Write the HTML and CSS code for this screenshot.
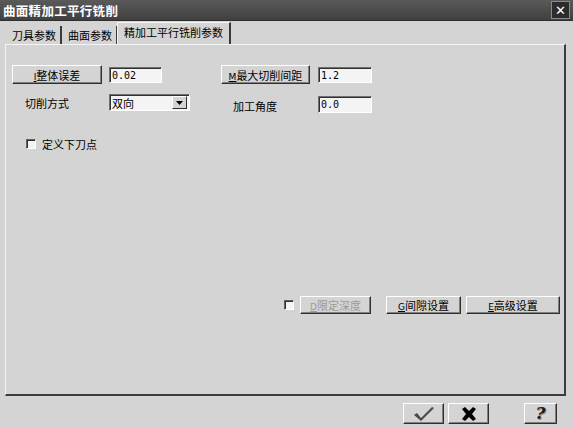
FILE: index.html
```html
<!DOCTYPE html>
<html lang="zh-CN">
<head>
    <meta charset="UTF-8">
    <title>曲面精加工平行铣削</title>
    <link rel="stylesheet" href="styles.css">
</head>
<body>
    <div class="dialog">
        <div class="titlebar">
            <span class="title">曲面精加工平行铣削</span>
            <span class="close">✕</span>
        </div>

        <div class="tabs">
            <div class="tab">刀具参数</div>
            <div class="tab">曲面参数</div>
            <div class="tab active">精加工平行铣削参数</div>
        </div>

        <div class="panel">
            <div class="row row-first">
                <button class="btn btn-tol"><u>I</u>整体误差</button>
                <div class="field field-tol">0.02</div>
                <button class="btn btn-step"><u>M</u>最大切削间距</button>
                <div class="field field-step">1.2</div>
            </div>

            <div class="row row-second">
                <span class="label label-mode">切削方式</span>
                <div class="select">
                    <span class="select-text">双向</span>
                    <span class="select-arrow"><svg width="7" height="4" viewBox="0 0 7 4"><path d="M0 0h7L3.5 4z" fill="#000"/></svg></span>
                </div>
                <span class="label label-angle">加工角度</span>
                <div class="field field-angle">0.0</div>
            </div>

            <div class="row row-check">
                <span class="check"></span>
                <span class="label">定义下刀点</span>
            </div>

            <div class="row row-tools">
                <span class="check"></span>
                <button class="btn btn-depth" disabled><u>D</u>限定深度</button>
                <button class="btn btn-gap"><u>G</u>间隙设置</button>
                <button class="btn btn-adv"><u>E</u>高级设置</button>
            </div>
        </div>

        <div class="footer">
            <button class="btn btn-icon btn-ok">
                <svg width="22" height="16" viewBox="0 0 22 16"><path d="M1 9l3-2 4 5L19 1l2 1L8 15z" fill="#4a4a4a"/></svg>
            </button>
            <button class="btn btn-icon btn-cancel">
                <svg width="16" height="14" viewBox="0 0 16 14"><path d="M1 2l3-2 4 4 4-4 3 2-4 5 4 5-3 2-4-4-4 4-3-2 4-5z" fill="#000"/></svg>
            </button>
            <button class="btn btn-icon btn-help">
                <span class="help">?</span>
            </button>
        </div>
    </div>
</body>
</html>
```

FILE: styles.css
```css
body {
    margin: 0;
    background: #d4d4d4;
    font-family: "Noto Sans CJK SC", "DejaVu Sans", sans-serif;
    font-size: 11px;
    color: #000;
}
.dialog {
    width: 573px;
    height: 427px;
    background: #d4d4d4;
    overflow: hidden;
}
.titlebar {
    height: 20px;
    display: flex;
    align-items: center;
    justify-content: space-between;
    padding: 0 3px 0 3px;
    background: linear-gradient(#5a5a5a, #404040);
    border-bottom: 1px solid #2e2e2e;
}
.title {
    color: #fff;
    font-weight: bold;
    font-size: 12.5px;
    letter-spacing: 0.3px;
}
.close {
    width: 17px;
    height: 16px;
    display: flex;
    align-items: center;
    justify-content: center;
    background: #2c2c2c;
    border: 1px solid #8a8a8a;
    color: #fff;
    font-family: "DejaVu Sans", sans-serif;
    font-weight: bold;
    font-size: 13px;
}
.tabs {
    display: flex;
    align-items: flex-end;
    height: 23px;
    padding-left: 6px;
}
.tab {
    height: 18px;
    line-height: 18px;
    padding: 0 4px 0 6px;
    border-right: 2px solid #3a3a3a;
    font-size: 11px;
}
.tab.active {
    height: 21px;
    line-height: 19px;
    padding: 0 6px 0 6px;
    border-top: 1px solid #f4f4f4;
    border-left: 1px solid #f4f4f4;
    margin-left: -1px;
}
.panel {
    margin: 0 7px 0 5px;
    height: 352px;
    border-top: 1px solid #f4f4f4;
    border-left: 1px solid #f4f4f4;
    border-right: 2px solid #3c3c3c;
    border-bottom: 2px solid #3c3c3c;
    box-sizing: border-box;
    padding: 20px 0 0 6px;
}
.row {
    display: flex;
    align-items: center;
}
.btn {
    font-family: inherit;
    font-size: 11px;
    height: 19px;
    padding: 0;
    background: #d4d4d4;
    border: 1px solid;
    border-color: #fff #303030 #303030 #fff;
    box-shadow: inset -1px -1px #808080;
    color: #000;
}
.btn u {
    text-decoration: underline;
    font-family: "DejaVu Sans", sans-serif;
    font-size: 9px;
}
.btn:disabled {
    color: #9a9a9a;
}
.field {
    height: 16px;
    line-height: 16px;
    box-sizing: border-box;
    padding-left: 2px;
    background: #f4f4f4;
    border: 1px solid;
    border-color: #707070 #fff #fff #707070;
    box-shadow: inset 1px 1px #303030;
    font-family: "DejaVu Sans Mono", monospace;
    font-size: 10px;
}
.btn-tol {
    width: 90px;
}
.field-tol {
    width: 53px;
    margin-left: 7px;
}
.btn-step {
    width: 89px;
    margin-left: 59px;
}
.field-step {
    width: 54px;
    margin-left: 8px;
}
.row-second {
    margin-top: 10px;
    align-items: flex-start;
}
.label-mode {
    width: 91px;
    padding-left: 7px;
    box-sizing: border-box;
    margin-left: 6px;
    margin-top: 1px;
}
.select {
    width: 81px;
    height: 17px;
    box-sizing: border-box;
    display: flex;
    align-items: center;
    justify-content: space-between;
    background: #f4f4f4;
    border: 1px solid;
    border-color: #707070 #fff #fff #707070;
    box-shadow: inset 1px 1px #303030;
    padding: 0 2px 0 2px;
}
.select-arrow {
    width: 13px;
    height: 11px;
    display: flex;
    align-items: center;
    justify-content: center;
    background: #d4d4d4;
    border: 1px solid;
    border-color: #fff #303030 #303030 #fff;
}
.label-angle {
    margin-left: 43px;
    margin-top: 4px;
    width: 85px;
}
.field-angle {
    width: 54px;
    height: 17px;
    margin-top: 2px;
}
.row-check {
    margin-top: 22px;
    padding-left: 14px;
}
.check {
    width: 10px;
    height: 10px;
    box-sizing: border-box;
    background: #f4f4f4;
    border: 1px solid;
    border-color: #606060 #fff #fff #606060;
    box-shadow: inset 1px 1px #303030;
    margin-right: 6px;
}
.row-tools {
    margin-top: 144px;
    padding-left: 272px;
}
.btn-depth {
    width: 71px;
    height: 18px;
}
.btn-gap {
    width: 75px;
    height: 18px;
    margin-left: 15px;
}
.btn-adv {
    width: 94px;
    height: 18px;
    margin-left: 5px;
}
.footer {
    display: flex;
    padding: 7px 0 0 403px;
}
.btn-icon {
    height: 21px;
    display: flex;
    align-items: center;
    justify-content: center;
}
.btn-ok {
    width: 41px;
}
.btn-cancel {
    width: 41px;
    margin-left: 4px;
}
.btn-help {
    width: 33px;
    margin-left: 35px;
}
.help {
    font-family: "DejaVu Serif", serif;
    font-weight: bold;
    font-style: italic;
    font-size: 17px;
    line-height: 17px;
    color: #1a1a1a;
    text-shadow: 1px 1px #888;
}
```
